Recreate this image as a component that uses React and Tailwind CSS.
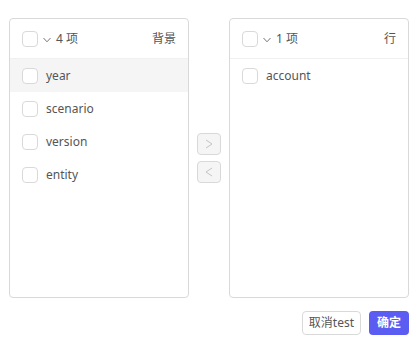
import React from 'react';

const font = { fontFamily: '"Noto Sans", "Noto Sans CJK SC", sans-serif' };

const Check = () => (
  <span className="w-4 h-4 shrink-0 rounded-[4px] border border-[#d9d9d9] bg-white" />
);

const Chevron = () => (
  <svg width="8" height="6" viewBox="0 0 8 6" className="ml-[5px] mt-[2px]">
    <path d="M0.5 1 L4 4.8 L7.5 1" fill="none" stroke="#777" strokeWidth="1" />
  </svg>
);

const Panel = ({ count, title, items, active }) => (
  <div className="w-[180px] h-[280px] border border-[#d9d9d9] rounded-[4px] flex flex-col bg-white">
    <div className="h-[40px] border-b border-[#f0f0f0] flex items-center px-3">
      <Check />
      <Chevron />
      <span className="ml-[5px] text-[12px] text-[#555]">{count} 项</span>
      <span className="ml-auto text-[12px] text-[#555]">{title}</span>
    </div>
    <div className="flex flex-col">
      {items.map((it) => (
        <div
          key={it}
          className={`h-[33px] flex items-center px-3 gap-2 ${it === active ? 'bg-[#f5f5f5]' : ''}`}
        >
          <Check />
          <span className="text-[12px] text-[#555]">{it}</span>
        </div>
      ))}
    </div>
  </div>
);

export default function App() {
  return (
    <div className="w-[420px] h-[342px] bg-white pt-[18px] pl-[9px]" style={font}>
      <div className="flex items-center">
        <Panel count={4} title="背景" items={['year', 'scenario', 'version', 'entity']} active="year" />
        <div className="flex flex-col gap-[6px] px-2">
          <button className="w-6 h-[22px] border border-[#d9d9d9] bg-[#f5f5f5] rounded-[4px] flex items-center justify-center">
            <svg width="8" height="10" viewBox="0 0 8 10">
              <path d="M1 1 L7 5 L1 9" fill="none" stroke="#c4c4c4" strokeWidth="1" />
            </svg>
          </button>
          <button className="w-6 h-[22px] border border-[#d9d9d9] bg-[#f5f5f5] rounded-[4px] flex items-center justify-center">
            <svg width="8" height="10" viewBox="0 0 8 10">
              <path d="M7 1 L1 5 L7 9" fill="none" stroke="#c4c4c4" strokeWidth="1" />
            </svg>
          </button>
        </div>
        <Panel count={1} title="行" items={['account']} />
      </div>
      <div className="flex justify-end gap-2 w-[400px] mt-[13px]">
        <button className="h-6 px-[6px] border border-[#d9d9d9] rounded-[4px] text-[12px] text-[#555] bg-white">
          取消test
        </button>
        <button className="h-6 w-10 rounded-[4px] text-[12px] text-white bg-[#5b5cf2] font-bold">
          确定
        </button>
      </div>
    </div>
  );
}
